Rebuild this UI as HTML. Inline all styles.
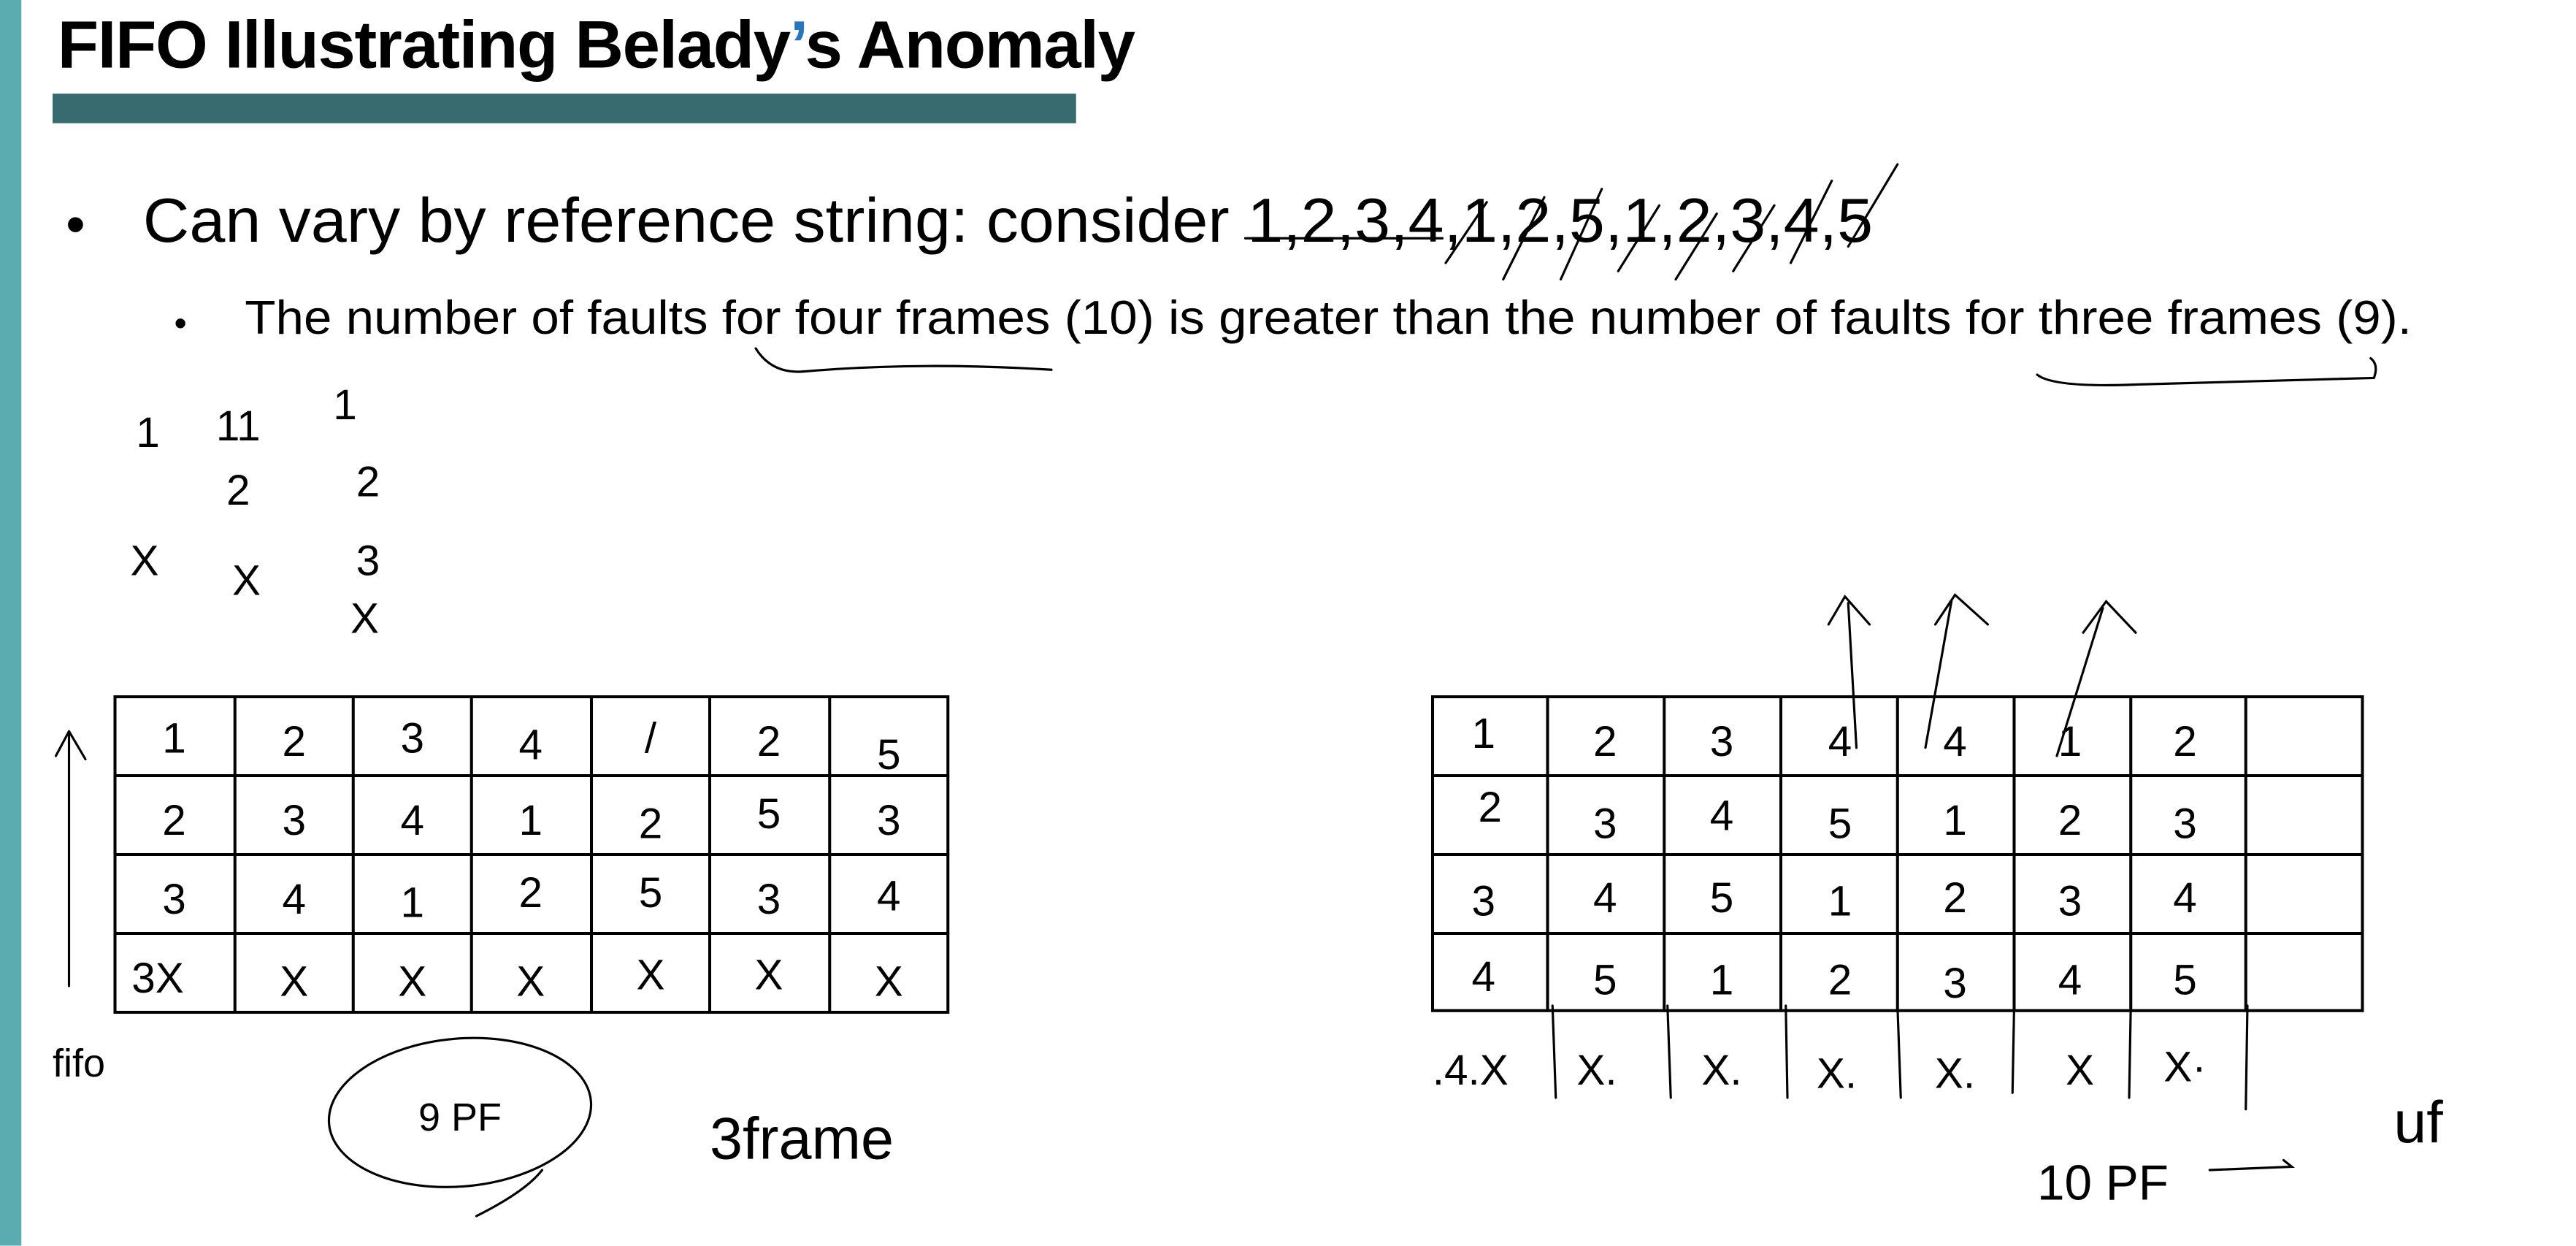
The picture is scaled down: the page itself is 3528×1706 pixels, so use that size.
<!DOCTYPE html>
<html><head><meta charset="utf-8"><style>
html,body{margin:0;padding:0;background:#fff;}
body{width:3528px;height:1704px;overflow:hidden;position:relative;}
#s{position:absolute;left:0;top:0;width:1568px;height:758px;transform:scale(2.25);transform-origin:0 0;font-family:"Liberation Sans",sans-serif;color:#000;}
.t{position:absolute;white-space:nowrap;transform-origin:0 0;}
svg{position:absolute;left:0;top:0;}
</style></head><body><div id="s">
<div style="position:absolute;left:0;top:0;width:13px;height:758px;background:#5aacb0"></div>
<div class="t" style="left:35px;top:4px;font-size:41px;font-weight:bold;letter-spacing:-0.6px;transform:scaleX(1.0)">FIFO Illustrating Belady<span style="color:#2e75b6">’</span>s Anomaly</div>
<div style="position:absolute;left:32px;top:57px;width:623px;height:18px;background:#376b70"></div>
<div class="t" style="left:40px;top:118px;font-size:34px">•</div>
<div class="t" style="left:87px;top:114px;font-size:38px;transform:scaleX(1.03)">Can vary by reference string: consider 1,2,3,4,1,2,5,1,2,3,4,5</div>
<div class="t" style="left:106px;top:184px;font-size:22px">•</div>
<div class="t" style="left:149px;top:178px;font-size:29px;transform:scaleX(1.06)">The number of faults for four frames (10) is greater than the number of faults for three frames (9).</div>
<svg width="1568" height="758" viewBox="0 0 1568 758" fill="none" stroke="#000" stroke-width="1.4" stroke-linecap="round">
<g stroke-width="1.8">
<rect x="70" y="424" width="507" height="192"/>
<path d="M143 424V616M215 424V616M287 424V616M360 424V616M432 424V616M505 424V616M70 472H577M70 520H577M70 568H577"/>
<rect x="872" y="424" width="566" height="191"/>
<path d="M942 424V615M1013 424V615M1084 424V615M1155 424V615M1226 424V615M1297 424V615M1367 424V615M872 472H1438M872 520H1438M872 568H1438"/>
</g>
<path d="M460 212Q470 228 490 226Q560 220 640 225"/>
<path d="M1240 228Q1250 236 1300 234Q1380 232 1445 230Q1448 222 1443 218"/>
<path d="M758 145H878M880 160L905 123M915 170L940 120M950 170L975 115M985 165L1010 125M1020 170L1045 130M1055 165L1080 125M1090 160L1115 110M1125 150L1155 100"/>
<path d="M42 600V445M42 445L34 460M42 445L52 462"/>
<ellipse cx="280" cy="677" rx="80" ry="45" transform="rotate(-5 280 677)"/>
<path d="M290 740Q320 725 330 712"/>
<path d="M1130 455L1125 367M1113 380L1123 363L1138 380M1172 455L1188 365M1178 380L1190 362L1210 380M1252 460L1280 370M1268 385L1282 366L1300 385"/>
<path d="M945 612L947 668M1015 612L1017 668M1087 612L1088 668M1155 612L1157 668M1226 612L1225 665M1297 612L1296 668M1368 612L1367 675"/>
<path d="M1345 712L1395 710L1390 706"/>
</g>
<g font-size="26" fill="#000" stroke="none" text-anchor="middle" font-family="Liberation Sans,sans-serif" font-weight="normal">
<text x="106" y="458">1</text><text x="179" y="460">2</text><text x="251" y="458">3</text><text x="323" y="462">4</text><text x="396" y="458">/</text><text x="468" y="460">2</text><text x="541" y="468">5</text>
<text x="106" y="508">2</text><text x="179" y="508">3</text><text x="251" y="508">4</text><text x="323" y="508">1</text><text x="396" y="510">2</text><text x="468" y="504">5</text><text x="541" y="508">3</text>
<text x="106" y="556">3</text><text x="179" y="556">4</text><text x="251" y="558">1</text><text x="323" y="552">2</text><text x="396" y="552">5</text><text x="468" y="556">3</text><text x="541" y="554">4</text>
<text x="96" y="604">3X</text><text x="179" y="606">X</text><text x="251" y="606">X</text><text x="323" y="606">X</text><text x="396" y="602">X</text><text x="468" y="602">X</text><text x="541" y="606">X</text>
<text x="903" y="455">1</text><text x="977" y="460">2</text><text x="1048" y="460">3</text><text x="1120" y="460">4</text><text x="1190" y="460">4</text><text x="1260" y="460">1</text><text x="1330" y="460">2</text>
<text x="907" y="500">2</text><text x="977" y="510">3</text><text x="1048" y="505">4</text><text x="1120" y="510">5</text><text x="1190" y="508">1</text><text x="1260" y="508">2</text><text x="1330" y="510">3</text>
<text x="903" y="557">3</text><text x="977" y="555">4</text><text x="1048" y="555">5</text><text x="1120" y="557">1</text><text x="1190" y="555">2</text><text x="1260" y="557">3</text><text x="1330" y="555">4</text>
<text x="903" y="603">4</text><text x="977" y="605">5</text><text x="1048" y="605">1</text><text x="1120" y="605">2</text><text x="1190" y="607">3</text><text x="1260" y="605">4</text><text x="1330" y="605">5</text>
<text x="90" y="272">1</text><text x="145" y="268">11</text><text x="210" y="255">1</text><text x="145" y="307">2</text><text x="224" y="302">2</text><text x="224" y="350">3</text>
<text x="88" y="350">X</text><text x="150" y="362">X</text><text x="222" y="385">X</text>
<text x="895" y="660">.4.X</text><text x="972" y="660">X.</text><text x="1048" y="660">X.</text><text x="1118" y="662">X.</text><text x="1190" y="662">X.</text><text x="1266" y="660">X</text><text x="1330" y="658">X·</text>
<text x="280" y="688" font-size="24">9 PF</text>
<text x="48" y="655" font-size="24">fifo</text>
<text x="488" y="705" font-size="36">3frame</text>
<text x="1280" y="730" font-size="30">10 PF</text>
<text x="1472" y="695" font-size="36">uf</text>
</g>
</svg>
</div></body></html>
